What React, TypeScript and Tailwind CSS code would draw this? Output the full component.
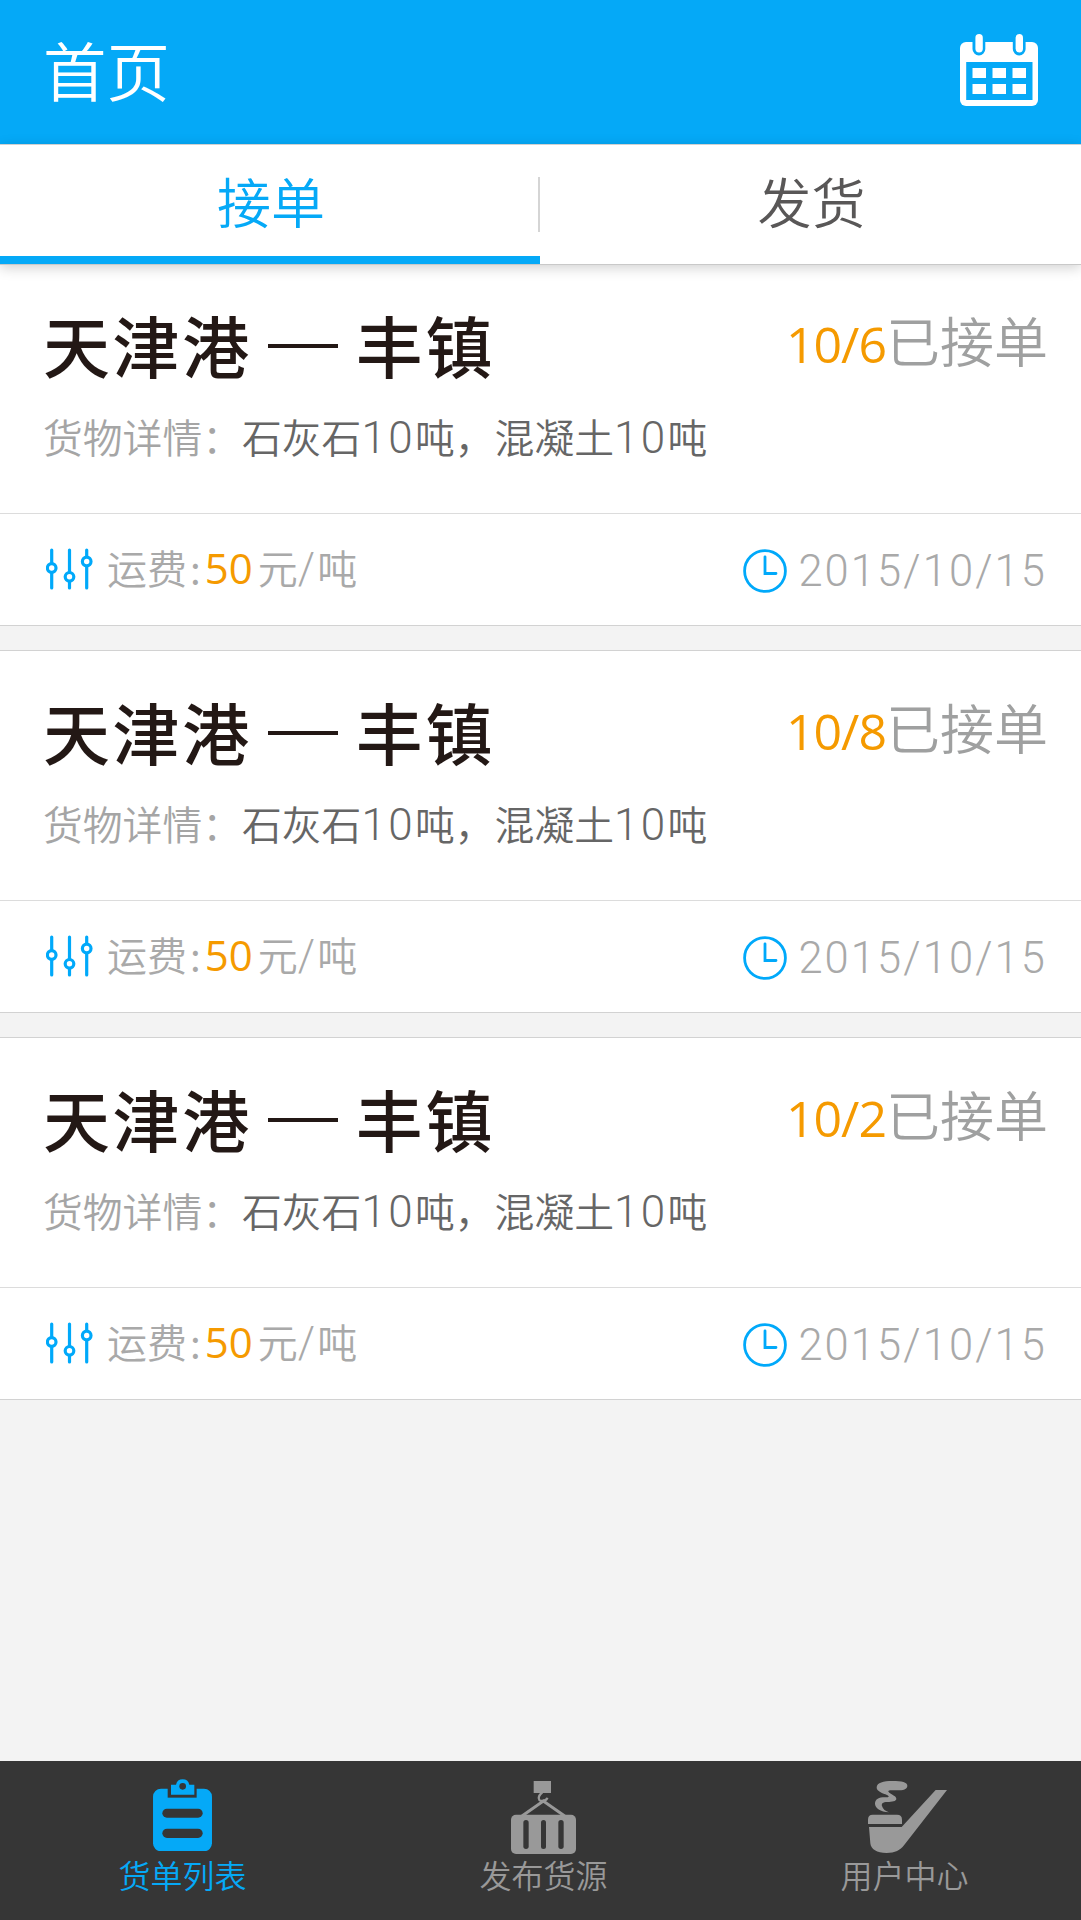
import type { ReactNode } from "react";
import clsx from "clsx";

const ORDERS = [
  { id: 1, from: "天津港", to: "丰镇", accepted: "10/6" },
  { id: 2, from: "天津港", to: "丰镇", accepted: "10/8" },
  { id: 3, from: "天津港", to: "丰镇", accepted: "10/2" },
];

function CalendarIcon() {
  return (
    <svg
      className="-mt-1"
      width="78"
      height="72"
      viewBox="0 0 78 72"
      aria-hidden
    >
      <rect x="0" y="8" width="78" height="64" rx="6" fill="#fff" />
      <path
        d="M12.5 7v8a6.4 6.4 0 0 0 12.8 0V7zM52.8 7v8a6.4 6.4 0 0 0 12.8 0V7zM6.2 28h66.3v38H6.2z"
        fill="#05a9f7"
      />
      <rect x="15.4" y="0" width="7.4" height="18.5" rx="3.7" fill="#fff" />
      <rect x="55.6" y="0" width="7.4" height="18.5" rx="3.7" fill="#fff" />
      <path
        d="M12.5 34h13.5v10H12.5zM32.5 34H46v10H32.5zM52.5 34H66v10H52.5zM12.5 50h13.5v10H12.5zM32.5 50H46v10H32.5zM52.5 50H66v10H52.5z"
        fill="#fff"
      />
    </svg>
  );
}

function SlidersIcon() {
  return (
    <svg
      className="-mt-px"
      width="47"
      height="42"
      viewBox="0 0 47 42"
      stroke="#00a9fa"
      strokeWidth="3.2"
      strokeLinecap="round"
      fill="#fff"
      aria-hidden
    >
      <path d="M5.7 2v38M23.5 2v38M40.7 2v38" />
      <circle cx="5.7" cy="20" r="4.3" />
      <circle cx="23.5" cy="28.8" r="4.3" />
      <circle cx="40.7" cy="13.5" r="4.3" />
    </svg>
  );
}

function ClockIcon() {
  return (
    <svg
      className="mt-[2px]"
      width="44"
      height="44"
      viewBox="0 0 44 44"
      stroke="#00a9fa"
      strokeWidth="2.8"
      fill="none"
      aria-hidden
    >
      <circle cx="22" cy="22" r="20.4" />
      <path d="M22 7.8v16.7h11" strokeLinecap="round" />
    </svg>
  );
}

function ClipboardIcon() {
  return (
    <svg
      className="mb-[3px]"
      width="59"
      height="72.3"
      viewBox="159 88 177 217"
      aria-hidden
    >
      <rect x="159" y="117" width="177" height="188" rx="24" fill="#05a9f7" />
      <path d="M203 112h87v32h-87z" fill="#363636" />
      <path d="M213 105h15a20.5 20.5 0 0 1 40 0h15v30h-70z" fill="#05a9f7" />
      <circle cx="248" cy="110" r="10" fill="#363636" />
      <rect x="187" y="177" width="121" height="27" rx="13.5" fill="#363636" />
      <rect x="187" y="237" width="121" height="28" rx="14" fill="#363636" />
    </svg>
  );
}

function ContainerIcon() {
  return (
    <svg width="65" height="73" viewBox="153 93 195 219" aria-hidden>
      <path d="M221 93h52v36h-52z" fill="#999" />
      <path
        d="M247 127c-9 7-14 17-9 23 6 6 22 2 24-7"
        fill="none"
        stroke="#999"
        strokeWidth="7"
      />
      <path
        d="M186 198l64-45 64 45"
        fill="none"
        stroke="#999"
        strokeWidth="9"
      />
      <rect x="153" y="194" width="195" height="118" rx="15" fill="#999" />
      <rect x="190" y="210" width="16" height="87" rx="8" fill="#363636" />
      <rect x="243" y="210" width="15" height="87" rx="7.5" fill="#363636" />
      <rect x="295" y="210" width="16" height="87" rx="8" fill="#363636" />
    </svg>
  );
}

function PipeIcon() {
  return (
    <svg
      className="mb-px ml-[5px]"
      width="79"
      height="72"
      viewBox="144 93 237 216"
      fill="#999"
      aria-hidden
    >
      <path d="M147 231h98L347 120h34L252 286c-11 15-27 23-52 23-30 0-47-11-49-29z" />
      <path d="M158 194h73q15 0 15 15v13H144v-13q0-15 14-15z" />
      <path d="M207 187c-26-2-42-13-42-26 0-15 15-20 33-19 9 0 11-3 3-7-12-4-32-11-31-23 1-14 20-19 47-19 29 0 45 4 45 14 0 11-12 14-32 14h-17c-9 0-10 3-5 7 9 6 21 11 21 18 0 8-13 9-27 10-14 0-18 5-16 12 2 9 11 16 21 19z" />
    </svg>
  );
}

function Digits({ children, wide }: { children: ReactNode; wide?: boolean }) {
  return (
    <span
      className={clsx(
        "font-[Roboto]",
        wide
          ? "text-[44px] leading-none font-[330] tracking-[2.4px]"
          : "text-[43.5px] leading-none font-[350] tracking-[2.1px]",
      )}
    >
      {children}
    </span>
  );
}

function Tab({ label, active }: { label: string; active?: boolean }) {
  return (
    <div
      className={clsx(
        "flex items-center justify-center border-b-8 text-[54px] leading-none",
        active
          ? "w-[540px] border-[#05a9f7] pl-[2px] text-[#05a9f7]"
          : "flex-1 border-white pl-[2px] text-[#595757]",
      )}
    >
      {label}
    </div>
  );
}

function OrderCard({ order }: { order: (typeof ORDERS)[number] }) {
  return (
    <article className="border-y border-[#d2d2d2] bg-white">
      <div className="h-[250px] border-b border-[#dcdcdc] pr-[33px] pl-[43px]">
        <div className="flex justify-between pt-[40px]">
          <h2 className="flex h-[80px] items-center text-[67px] leading-[80px] font-medium text-[#231815]">
            <span className="tracking-[2.6px]">{order.from}</span>
            <span className="mt-1 mr-[18px] ml-[16px] h-1 w-[70px] bg-[#231815]" />
            <span className="tracking-[2.6px]">{order.to}</span>
          </h2>
          <p className="flex h-[72px] items-baseline text-[54px] leading-[72px] text-[#9fa0a0]">
            <span className="font-['Open_Sans'] text-[50px] font-medium tracking-[-1px] text-[#f59a00]">
              {order.accepted}
            </span>
            已接单
          </p>
        </div>
        <p className="mt-[24px] flex h-[56px] items-baseline text-[39.8px] leading-[56px] text-[#a5a5a5]">
          货物详情：
          <span className="text-[#666]">
            石灰石<Digits wide>10</Digits>吨，混凝土<Digits wide>10</Digits>吨
          </span>
        </p>
      </div>

      <div className="flex h-[111px] items-center justify-between pr-[34px] pl-[46px] text-[40px] leading-[56px] text-[#a9a9a9]">
        <div className="flex items-center">
          <SlidersIcon />
          <p className="-mt-1 ml-[14px] flex items-baseline">
            运费<span className="mr-1 ml-[3px]">:</span>
            <span className="mr-[5px] font-['Open_Sans'] text-[42px] font-medium text-[#f59a00]">
              50
            </span>
            元<Digits>/</Digits>吨
          </p>
        </div>
        <div className="flex items-center">
          <ClockIcon />
          <time className="-mt-[2px] ml-[11px]">
            <Digits>2015/10/15</Digits>
          </time>
        </div>
      </div>
    </article>
  );
}

function NavItem({
  icon,
  label,
  active,
}: {
  icon: ReactNode;
  label: string;
  active?: boolean;
}) {
  return (
    <a
      className={clsx(
        "flex w-[361px] shrink-0 flex-col items-center pt-[18px]",
        active ? "text-[#05a9f7]" : "text-[#999]",
      )}
    >
      <span className="flex h-[75px] items-end">{icon}</span>
      <span className="-mt-[2px] text-[32px] leading-[44px]">{label}</span>
    </a>
  );
}

export default function App() {
  return (
    <div className="flex h-[1920px] w-[1081px] flex-col bg-[#f3f3f3] font-['Noto_Sans_CJK_SC',sans-serif] font-[350]">
      <header className="flex h-[144px] shrink-0 items-center justify-between bg-[#05a9f7] px-[43px]">
        <h1 className="-mt-2 text-[63.5px] leading-[80px] text-white">首页</h1>
        <CalendarIcon />
      </header>

      <div className="relative z-10 flex h-[121px] shrink-0 items-stretch border-y border-t-[#d0d0d0] border-b-[#c9c9c9] bg-white shadow-[0_3px_12px_rgba(0,0,0,0.18)]">
        <Tab label="接单" active />
        <span className="absolute top-8 left-[538px] h-[55px] w-[2px] bg-[#d5d5d5]" />
        <Tab label="发货" />
      </div>

      {/* first card's top border is tucked under the tab bar */}
      <main className="-mt-[2px] flex-1 space-y-[24px]">
        {ORDERS.map((order) => (
          <OrderCard key={order.id} order={order} />
        ))}
      </main>

      <nav className="flex h-[159px] shrink-0 overflow-hidden bg-[#363636] pl-[2px]">
        <NavItem icon={<ClipboardIcon />} label="货单列表" active />
        <NavItem icon={<ContainerIcon />} label="发布货源" />
        <NavItem icon={<PipeIcon />} label="用户中心" />
      </nav>
    </div>
  );
}
